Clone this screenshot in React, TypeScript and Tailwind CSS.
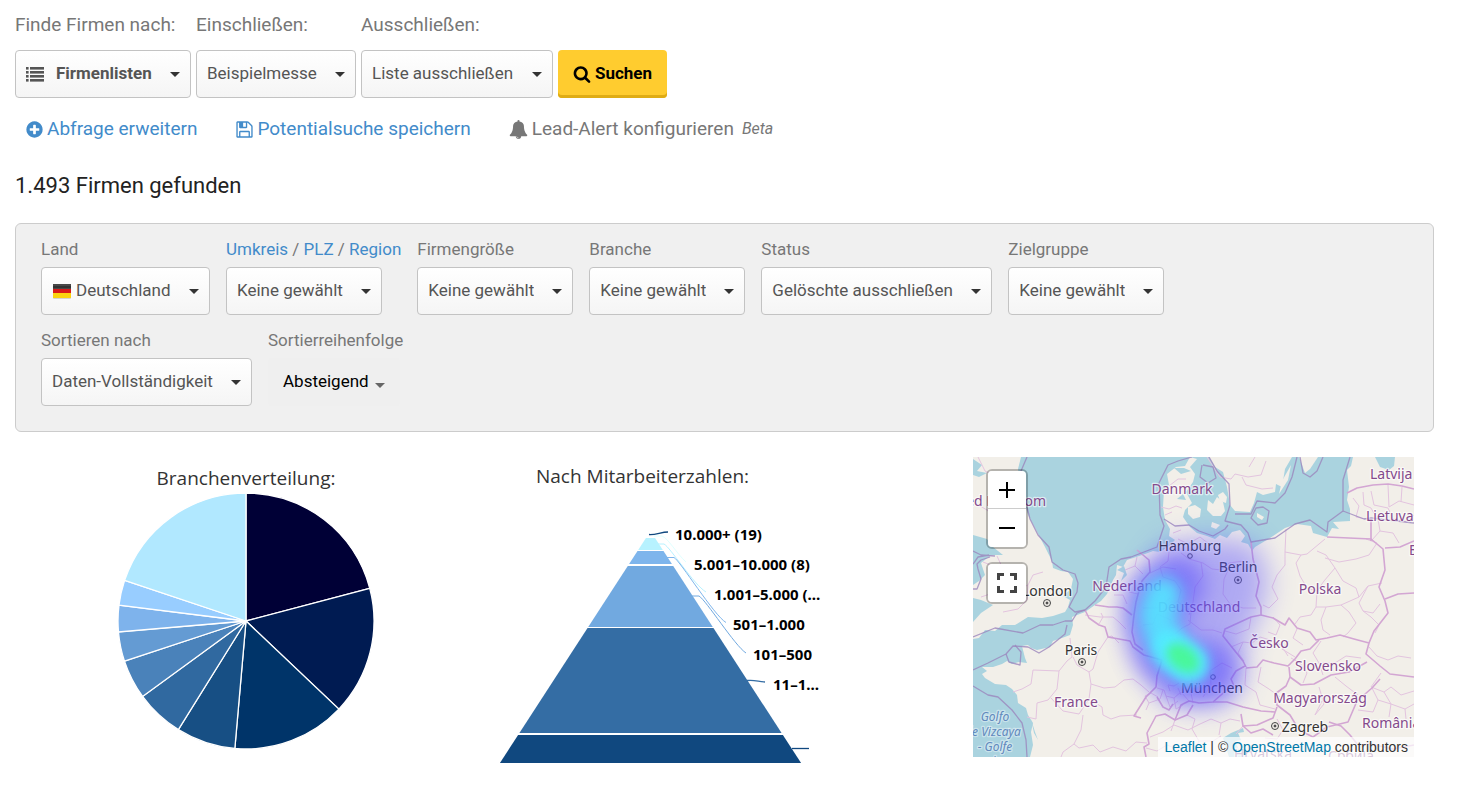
import React from 'react';
import clsx from 'clsx';

interface DropdownProps {
    id: string;
    label: React.ReactNode;
    name: string;
    value: string;
    icon?: React.ReactNode;
    bold?: boolean;
    size?: 'lg' | 'md';
}

const Caret = ({ className }: { className?: string }) => (
    <svg viewBox="0 0 10 5" className={clsx('w-[10px] h-[5px] pointer-events-none', className)}>
        <path d="M0 0h10L5 5z" fill="currentColor" />
    </svg>
);

// Font Awesome 4 glyphs, drawn on a 1792 grid
const Glyph = ({ d, className }: { d: string; className?: string }) => (
    <svg viewBox="0 0 1792 1792" className={clsx('shrink-0', className)} fill="currentColor">
        <path d={d} />
    </svg>
);

const PLUS = 'M1344 960v-128q0-26-19-45t-45-19h-256v-256q0-26-19-45t-45-19h-128q-26 0-45 19t-19 45v256h-256q-26 0-45 19t-19 45v128q0 26 19 45t45 19h256v256q0 26 19 45t45 19h128q26 0 45-19t19-45v-256h256q26 0 45-19t19-45zm320-64q0 209-103 385.5t-279.5 279.5-385.5 103-385.5-103-279.5-279.5-103-385.5 103-385.5 279.5-279.5 385.5-103 385.5 103 279.5 279.5 103 385.5z';
const SAVE = 'M512 1536h768v-384h-768v384zm896 0h128v-896q0-14-10-38.5t-20-34.5l-281-281q-10-10-34-20t-39-10v416q0 40-28 68t-68 28h-576q-40 0-68-28t-28-68v-416h-128v1280h128v-416q0-40 28-68t68-28h832q40 0 68 28t28 68v416zm-384-928v-320q0-13-9.5-22.5t-22.5-9.5h-192q-13 0-22.5 9.5t-9.5 22.5v320q0 13 9.5 22.5t22.5 9.5h192q13 0 22.5-9.5t9.5-22.5zm640 32v928q0 40-28 68t-68 28h-1344q-40 0-68-28t-28-68v-1344q0-40 28-68t68-28h928q40 0 88 20t76 48l280 280q28 28 48 76t20 88z';
const BELL = 'M912 1696q0-16-16-16-59 0-101.5-42.5t-42.5-101.5q0-16-16-16t-16 16q0 73 51.5 124.5t124.5 51.5q16 0 16-16zm816-288q0 52-38 90t-90 38h-448q0 106-75 181t-181 75-181-75-75-181h-448q-52 0-90-38t-38-90q50-42 91-88t85-119.5 74.5-158.5 50-206 19.5-260q0-152 117-282.5t307-158.5q-8-19-8-39 0-40 28-68t68-28 68 28 28 68q0 20-8 39 190 28 307 158.5t117 282.5q0 139 19.5 260t50 206 74.5 158.5 85 119.5 91 88z';
const SEARCH = 'M1216 832q0-185-131.5-316.5t-316.5-131.5-316.5 131.5-131.5 316.5 131.5 316.5 316.5 131.5 316.5-131.5 131.5-316.5zm512 832q0 52-38 90t-90 38q-54 0-90-38l-343-342q-179 124-399 124-143 0-273.5-55.5t-225-150-150-225-55.5-273.5 55.5-273.5 150-225 225-150 273.5-55.5 273.5 55.5 225 150 150 225 55.5 273.5q0 220-124 399l343 343q37 37 37 90z';

const ListIcon = () => (
    <svg viewBox="0 0 18 15" className="w-[18px] h-[15px] mr-3 shrink-0" fill="currentColor">
        {[0, 4, 8, 12].map((y) => (
            <g key={y}>
                <rect x="0" y={y} width="2.6" height="2.6" />
                <rect x="4" y={y} width="14" height="2.6" />
            </g>
        ))}
    </svg>
);

const GermanFlag = () => (
    <svg viewBox="0 0 20 18" className="w-5 h-[18px] mr-1 shrink-0">
        <rect x="1" y="3" width="18" height="14" rx="1" fill="#000" opacity="0.15" />
        <rect x="1" y="2" width="18" height="5" fill="#484848" />
        <rect x="1" y="4" width="18" height="2" fill="#333" />
        <rect x="1" y="7" width="18" height="4" fill="#d81818" />
        <rect x="1" y="11" width="18" height="5" fill="#fbd30f" />
    </svg>
);

const Dropdown: React.FC<DropdownProps> = ({ id, label, name, value, icon, bold, size = 'md' }) => (
    <div className={clsx('flex flex-col items-start', size === 'lg' ? 'gap-[13px]' : 'gap-[6px]')}>
        {typeof label === 'string' ? (
            <label htmlFor={id} className={clsx('leading-6', size === 'lg' ? 'text-[19px]' : 'text-[17px]')}>{label}</label>
        ) : (
            <div className="text-[17px] leading-6">{label}</div>
        )}
        <div className="relative flex items-center h-12 pl-[10px] rounded border border-[#c3c3c3] bg-linear-to-b from-white to-[#f5f5f5] text-[#555]">
            {icon}
            <select
                id={id}
                aria-label={name}
                defaultValue={value}
                className={clsx('appearance-none bg-transparent h-full pr-[38px] text-[17px] outline-none', bold && 'font-bold')}
            >
                <option>{value}</option>
            </select>
            <Caret className="absolute right-[10px] top-[21px] text-[#333]" />
        </div>
    </div>
);

const SLICES = [
    { to: 75.2, fill: '#000036' },
    { to: 133.5, fill: '#001b52' },
    { to: 185, fill: '#003469' },
    { to: 211.9, fill: '#174f84' },
    { to: 233.9, fill: '#3069a0' },
    { to: 251.7, fill: '#4a82ba' },
    { to: 265.1, fill: '#649bd3' },
    { to: 277.1, fill: '#7eb3ec' },
    { to: 288.5, fill: '#98cdff' },
    { to: 360, fill: '#b1e8ff' },
];

const slicePath = (from: number, to: number) => {
    const at = (deg: number) => {
        const rad = (deg * Math.PI) / 180;
        return `${128 + 128 * Math.sin(rad)} ${128 - 128 * Math.cos(rad)}`;
    };
    return `M128 128L${at(from)}A128 128 0 0 1 ${at(to)}Z`;
};

const PieChart = () => (
    <svg viewBox="0 0 256 256" className="w-64 h-64" role="img" aria-label="Branchenverteilung">
        {SLICES.map((slice, i) => (
            <path
                key={slice.fill}
                d={slicePath(i === 0 ? 0 : SLICES[i - 1].to, slice.to)}
                fill={slice.fill}
                stroke="#fff"
                strokeWidth="1.3"
            />
        ))}
    </svg>
);

const LEVELS = [
    { top: 11, bottom: 23, fill: '#b7f2ff' },
    { top: 24, bottom: 37, fill: '#7eb5ec' },
    { top: 39, bottom: 100, fill: '#71a9e0' },
    { top: 101, bottom: 206, fill: '#346da4' },
    { top: 208, bottom: 236, fill: '#10487f' },
];

const LEVEL_LABELS = [
    { x: 175, y: 13, text: '10.000+ (19)' },
    { x: 194, y: 43, text: '5.001–10.000 (8)' },
    { x: 214, y: 73, text: '1.001–5.000 (…' },
    { x: 233, y: 103, text: '501–1.000' },
    { x: 253, y: 133, text: '101–500' },
    { x: 273, y: 163, text: '11–1…' },
];

const half = (y: number) => (y - 4) * 0.649;

const PyramidChart = () => (
    <svg viewBox="0 0 330 240" className="w-[330px] h-60 overflow-visible" role="img" aria-label="Nach Mitarbeiterzahlen">
        {LEVELS.map(({ top, bottom, fill }) => (
            <path
                key={fill}
                d={`M${150.5 - half(top)} ${top}H${150.5 + half(top)}L${150.5 + half(bottom)} ${bottom}H${150.5 - half(bottom)}Z`}
                fill={fill}
            />
        ))}
        <g fill="none">
            <path d="M149 7.5C156 8 161 5 168 5" stroke="#10487f" strokeWidth="1.3" />
            <path d="M154 9h8c6 2 15 18 24 26" stroke="#e0ffff" />
            <path d="M158 17h6c6 3 30 41 42 48" stroke="#b7f2ff" />
            <path d="M166 30.500h8c6 3 40 58 52 65" stroke="#7eb5ec" />
            <path d="M192 69h7c7 4 36 50 47 57" stroke="#71a9e0" />
            <path d="M247 153.500c7-1 11 1 18 1.500" stroke="#346da4" strokeWidth="1.3" />
            <path d="M292 221.500h17" stroke="#10487f" strokeWidth="1.3" />
        </g>
        <g className="font-['Noto_Sans','Open_Sans',sans-serif] text-[15px] font-bold" fill="#000">
            {LEVEL_LABELS.map((l) => (
                <text key={l.text} x={l.x} y={l.y}>{l.text}</text>
            ))}
        </g>
    </svg>
);

const COUNTRIES = [
    { x: 73, y: 49, text: 'United Kingdom', anchor: 'end' },
    { x: 209, y: 37, text: 'Danmark' },
    { x: 154, y: 134, text: 'Nederland' },
    { x: 226, y: 155, text: 'Deutschland' },
    { x: 347, y: 137, text: 'Polska' },
    { x: 296, y: 191, text: 'Česko' },
    { x: 355, y: 214, text: 'Slovensko' },
    { x: 347, y: 246, text: 'Magyarország' },
    { x: 103, y: 250, text: 'France' },
    { x: 389, y: 271, text: 'România', anchor: 'start' },
    { x: 397, y: 22, text: 'Latvija', anchor: 'start' },
    { x: 393, y: 64, text: 'Lietuva', anchor: 'start' },
    { x: 436, y: 98, text: 'Беларусь', anchor: 'start' },
    { x: 290, y: 302, text: 'Hrvatska' },
    { x: 378, y: 304, text: 'Србија' },
] as const;

const CITIES = [
    { x: 217, y: 94, text: 'Hamburg', dot: [217, 99] },
    { x: 265, y: 115, text: 'Berlin', dot: [265, 123], capital: true },
    { x: 74, y: 139, text: 'London', dot: [74, 146], capital: true },
    { x: 108, y: 198, text: 'Paris', dot: [109, 205], capital: true },
    { x: 239, y: 236, text: 'München', dot: [240, 220] },
    { x: 332, y: 275, text: 'Zagreb', dot: [302, 269], capital: true },
];

const LAND = [
    // Great Britain
    'M0 0H48L45 12L50 40L55 58L62 71L72 90L79 104L80 111L88 114L95 115L100 122L98 132L90 139L97 143L95 150L92 155L80 159L69 161L55 160L42 168L29 168L22 174L12 173L6 181L0 182V165L8 156L20 148L8 143L0 141V128L6 124L12 118L8 106L18 98L30 98L20 90L14 82L0 78Z',
    // Continent
    'M217 0L212 9L203 10L194 17L196 28L191 33L190 50L192 63L197 72L196 79L202 83L196 89L187 95L180 94L172 97L163 100L154 103L150 110L144 108L143 118L140 123L134 137L128 144L122 148L112 155L99 160L100 168L97 178L89 181L80 184L77 190L64 193L58 191L55 188L49 189L52 201L54 206L46 205L39 207L34 204L29 207L20 210L9 210L14 214L9 217L12 221L22 227L33 228L39 232L44 238L45 246L53 251L55 258L60 266L58 275L60 288L57 300H441V0H380L378 9L374 13L376 30L374 43L377 52L377 64L360 65L366 72L359 71L354 80L340 76L338 69L324 67L312 71L297 81L282 90L279 94L275 87L268 85L272 79L267 73L259 75L254 81L247 78L242 82L234 79L224 76L217 70L210 60L212 53L219 46L213 35L220 25L222 17L217 10L224 2Z',
    // Sweden
    'M236 0L242 10L250 15L254 30L257 48L262 54L277 55L281 46L284 35L290 38L302 35L303 27L309 30L312 12L319 0Z',
    'M326 0L332 16L337 12L345 0Z',
    'M306 37L309 24L318 8L315 23Z',
    'M235 43L240 47L244 40L250 45L252 54L248 59L240 59L234 53Z',
    'M215 50L222 48L228 52L227 60L220 62L215 57Z',
    'M245 38L250 35L254 40L253 46L247 44Z',
    'M284 56L291 60L289 63L284 60Z',
    'M239 65L247 68L243 72L238 70Z',
];

const WATER = [
    'M402 0L407 10L416 13L421 9L422 0Z',
    'M250 281L258 276L270 271L271 275L265 276L268 283L262 284L266 293L276 300H256Z',
    'M144 113L151 116L148 124L154 118L151 109Z',
    'M201 11L208 17L218 14L211 11Z',
    'M210 37L204 42L213 43Z',
    'M0 2L9 8L4 14L14 16L6 20L0 18Z',
    'M58 262L62 275L65 283L61 276Z',
];

// International and maritime boundaries
const BORDERS = [
    'M54 0L48 14L51 38L57 62L65 78L76 90L79 105L90 113L102 117L105 126L104 135L99 144L96 150L102 155L112 153',
    'M219 0L205 4L195 8L186 26L187 58L191 69L184 90L158 100L148 102L136 110L133 130L122 144L112 153L104 156L99 164L92 164L80 168L67 168L50 176L22 171L0 180',
    'M0 213L15 206L33 197L40 189L55 190L66 196L76 190L92 177L94 168',
    'M33 197L36 205L47 208L48 195L42 188',
    'M0 229L15 238L25 240L39 253L49 266L53 283L54 300',
    'M236 0L244 14L256 27L257 48L252 64L268 68L275 76L278 85L302 81L322 67L337 63L354 75L355 65L370 54L370 23L377 0',
    'M230 8L240 10L243 21L235 26L227 20L229 8',
    'M324 0L319 20L312 36L302 46L284 44L278 57L262 57',
    'M290 50L296 54L294 66L285 68L278 61L283 51Z',
    'M327 0L330 16L337 20L344 14L350 0',
    'M370 54L391 62L398 61L441 66',
    'M191 62L202 69L216 68L226 74L240 79L252 72L255 68',
    'M0 94L8 98L22 99M0 107L5 100L16 98M17 100L8 103L4 107L5 112L8 122L4 132L0 132',
];

const COUNTRY_BORDERS = [
    'M278 85L280 102L286 125L283 139L288 150L288 158L278 160L252 172L250 179L258 189L270 204L273 210',
    'M272 209L263 214L258 222L261 229L256 231L240 245L226 246L216 244L208 248L202 263L192 257L183 259L174 276L176 287L171 290L173 300',
    'M112 153L116 161L126 168L132 170L135 180L146 182L157 184L160 190L171 198L189 203L184 219L183 230L173 240L161 259L168 261',
    'M164 93L176 103L177 115L169 124L166 134L163 145L161 158L159 175L162 187L170 193',
    'M122 148L136 150L144 150L150 151L159 158',
    'M288 158L300 161L312 168L316 161L324 171L337 175L343 183L354 181L367 178L381 182L396 186L393 197L407 209L417 217L441 220',
    'M273 211L284 210L290 203L301 206L315 209L322 202L328 194L337 192L346 183',
    'M316 210L317 220L328 228L341 227L358 218L376 215L394 205',
    'M317 220L313 229L302 237L304 248L317 258L326 273L340 280L354 270L375 265L384 244L399 231L407 222',
    'M240 245L254 245L270 250L288 254L302 255M268 257L270 269L284 268L300 261L304 250M270 269L278 276L290 272L300 278',
    'M354 80L398 82L410 92L412 113L406 130L412 144L415 156L401 174L396 186',
    'M374 36L384 31L400 28L415 27L429 29L441 32M398 62L398 84M412 91L427 90L441 84M412 142L425 137L441 136',
    'M356 265L368 269L377 278L385 288L398 287L420 292L441 288',
    'M184 240L190 250L196 253L200 247M202 263L214 258L220 248',
];

// Inner administrative lines
const REGIONS = [
    'M60 213L58 227L49 232L40 235M60 213L86 214L94 204L99 200L97 181M86 214L84 232L75 243L64 246L63 262L54 260M100 200L104 208L116 215L120 212L125 195L135 180',
    'M116 215L118 227L116 242L106 257L90 254L78 241M118 227L131 231L142 230L151 223L160 222L168 228L176 235M116 242L129 250L130 258L138 262L147 259L164 258',
    'M110 258L108 273L101 287L106 291L120 288L127 295L140 290L153 294L163 285L174 286M101 287L90 295L88 300',
    'M112 158L127 160L140 160L146 165L153 172M126 167L130 160L128 156M135 180L139 179L146 186',
    'M164 100L162 109L152 113M162 109L170 117M156 135L165 137M154 147L150 138L141 138',
    'M196 95L195 104L187 110L190 120L202 124L208 133L205 145L218 154L217 167L209 171L201 178L192 179L186 192M177 116L190 110L203 112M228 105L230 119L222 130L220 145L216 158M208 96L216 102L230 106L239 112L248 113L256 106L270 104M258 107L251 122L250 137L257 147L270 151L283 151M215 163L228 173L240 173L249 176M170 151L185 151L197 141M170 168L180 167L184 157L198 163',
    'M205 82L215 87L227 80L236 87M200 76L208 73M195 210L204 207L214 214L219 220L218 236L220 246M201 182L208 193L219 202L222 210M230 240L238 228L237 214L249 206L259 211',
    'M184 231L191 233L193 239L201 241L208 235L216 244M190 233L187 242L176 246L173 253M193 239L197 250L205 244M201 241L203 252L210 248M205 231L208 238M176 246L172 239L178 236L185 240M197 234L195 228L201 229L206 226',
    'M313 72L312 95L328 98L334 97L346 87L352 82M328 98L323 106L327 119L334 131L344 134L351 124L362 111L353 98L344 94M352 101L366 105L383 102L396 98L404 86L393 82M362 111L370 124L383 131L386 140L395 129L409 126M312 95L312 108L304 118L299 130L305 142L296 151L290 148',
    'M344 134L343 150L338 158L327 160L322 167M343 150L353 150L368 148L377 144L386 140M353 150L348 163L350 173L357 178M368 148L376 155L383 166L375 176L370 180M395 129L386 146L390 154L400 156L407 147M390 154L398 160L406 168L402 176',
    'M234 0L247 20L258 22L262 17L275 20L288 18L293 4M282 0L276 10M269 20L273 28L289 32L300 31M188 50L196 52L203 49L209 51M196 29L205 22L213 22M199 55L192 58',
    'M380 41L386 49L383 60L398 63M390 35L391 48L398 51L404 62M398 34L401 48L415 51L420 62M415 28L416 50L426 44L441 48M405 62L407 74L399 83M407 74L420 76L426 86M420 62L434 65L441 58M429 30L428 45',
    'M300 160L307 168L303 178L295 175M258 190L270 185L279 186L287 180L297 183L308 188L315 199M278 160L276 172L263 177L252 174M270 185L265 196L271 204M316 184L309 192L322 200M324 172L320 181L330 188',
    'M288 210L285 225L296 232L307 240M273 211L272 228L283 235L287 248L302 252M318 201L327 206L334 216L330 226M348 184L340 196L346 206L362 206L373 199L388 201M346 206L350 218',
    'M346 230L351 247L342 258M362 220L373 229L385 238M304 262L310 273L304 282L292 281M349 244L342 258M396 190L404 199L415 203L425 199L438 201M408 216L398 230L411 235L418 230L428 238L441 234M399 231L405 243L400 255L385 253M411 235L418 247L432 252L441 247M405 243L418 247M418 247L416 260M432 252L433 262',
    'M177 280L190 275L201 268L215 273L227 267L238 262L248 266L257 262L267 264M202 263L198 274M214 258L222 262L219 272L226 284M248 266L246 278M270 269L263 277M226 284L240 284L248 279M173 291L184 294L194 288L204 292L214 290M226 284L221 296M10 105L23 110L28 120M24 99L30 112L44 116M8 140L20 136L28 126M30 130L44 133L55 128L60 118L70 115M55 128L54 143L45 152L30 155',
    'M0 45L14 53L23 63M5 0L12 14L24 20L40 16M14 53L30 52L45 45',
];

const BLURS = [
    { id: 'soft', deviation: 14 },
    { id: 'mid', deviation: 11 },
    { id: 'hot', deviation: 8 },
    { id: 'core', deviation: 5 },
];

const MapView = () => (
    <svg viewBox="0 0 441 300" preserveAspectRatio="xMidYMid slice" className="block w-full h-[300px]" role="img" aria-label="Karte">
        <defs>
            {BLURS.map((b) => (
                <filter key={b.id} id={b.id} filterUnits="userSpaceOnUse" x="0" y="0" width="441" height="300" colorInterpolationFilters="sRGB">
                    <feGaussianBlur stdDeviation={b.deviation} />
                </filter>
            ))}
        </defs>
        <rect width="441" height="300" fill="#aad3df" />
        {LAND.map((d) => <path key={d} d={d} fill="#f2efe9" />)}
        {WATER.map((d) => <path key={d} d={d} fill="#aad3df" />)}
        <g fill="none" strokeLinejoin="round">
            {REGIONS.map((d) => <path key={d} d={d} stroke="#e3c4df" strokeWidth="1" />)}
            {COUNTRY_BORDERS.map((d) => <path key={d} d={d} stroke="#d3a6d3" strokeWidth="1.6" />)}
            {BORDERS.map((d) => <path key={d} d={d} stroke="#9b86bd" strokeWidth="1.3" opacity="0.8" />)}
        </g>
        <g className="font-['Noto_Sans',sans-serif]" textAnchor="middle" stroke="#fff" strokeOpacity="0.6" strokeWidth="2.5" paintOrder="stroke" strokeLinejoin="round">
            <g className="text-[14px]" fill="#844a8c">
                {COUNTRIES.map((c) => (
                    <text key={c.text} x={c.x} y={c.y} textAnchor={'anchor' in c ? c.anchor : 'middle'}>{c.text}</text>
                ))}
            </g>
            <g className="text-[14px]" fill="#333">
                {CITIES.map((c) => <text key={c.text} x={c.x} y={c.y}>{c.text}</text>)}
            </g>
            <g className="text-[12px] italic" fill="#6189bd" strokeOpacity="0.4">
                <text x="22" y="264">Golfo</text>
                <text x="20" y="279">de Vizcaya</text>
                <text x="22" y="294">- Golfe</text>
                <text x="22" y="309">de</text>
            </g>
        </g>
        {CITIES.map((c) => (
            <g key={c.text} stroke="#444" fill="none">
                <circle cx={c.dot[0]} cy={c.dot[1]} r={c.capital ? 3.5 : 2.3} />
                {c.capital && <circle cx={c.dot[0]} cy={c.dot[1]} r="1" fill="#444" />}
            </g>
        ))}
        {/* Heat layer */}
        <path d="M190 88L235 80L282 86L296 120L290 150L270 190L268 230L242 252L195 244L164 198L152 145Z" fill="#5a50ff" opacity="0.44" filter="url(#soft)" />
        <path d="M202 128L184 140L180 164L190 196L212 216L236 214" fill="none" stroke="#4a3cff" strokeWidth="60" strokeLinecap="round" strokeLinejoin="round" opacity="0.45" filter="url(#mid)" />
        <path d="M190 138L184 158L190 180L204 200L216 205" fill="none" stroke="#4ff4ff" strokeWidth="37" strokeLinecap="round" strokeLinejoin="round" opacity="0.8" filter="url(#hot)" />
        <path d="M198 192L216 208" fill="none" stroke="#4ff4ff" strokeWidth="38" strokeLinecap="round" opacity="0.6" filter="url(#core)" />
        <ellipse cx="210" cy="201" rx="18" ry="12" transform="rotate(38 210 201)" fill="#49f79c" filter="url(#core)" />
    </svg>
);

const MAP_BUTTON = 'flex items-center justify-center w-[38px] h-[38px] bg-white text-black';

export default function App() {
    return (
        <main className="pl-[15px] pr-9 pt-[13px] pb-9 font-[Roboto,sans-serif] text-[#777] bg-white">
            {/* Search bar */}
            <form className="flex flex-wrap items-end gap-[5px]" onSubmit={(e) => e.preventDefault()}>
                <Dropdown id="by" size="lg" label="Finde Firmen nach:" name="Finde Firmen nach" value="Firmenlisten" icon={<ListIcon />} bold />
                <Dropdown id="include" size="lg" label="Einschließen:" name="Einschließen" value="Beispielmesse" />
                <Dropdown id="exclude" size="lg" label="Ausschließen:" name="Ausschließen" value="Liste ausschließen" />
                <button className="flex items-center h-12 px-[15px] gap-1 rounded bg-[#ffcc2f] shadow-[inset_0_-3px_0_#dfac14] text-black text-[17px] font-bold">
                    <Glyph d={SEARCH} className="w-[18px] h-[18px]" />
                    Suchen
                </button>
            </form>

            <nav className="flex flex-wrap items-center mt-[17px] px-[10px] gap-x-[38px] text-[19px] leading-7 text-[#428bca]">
                <a href="#erweitern" className="flex items-center gap-[3px]">
                    <Glyph d={PLUS} className="w-[19px] h-[19px]" />
                    Abfrage erweitern
                </a>
                <a href="#speichern" className="flex items-center gap-[3px]">
                    <Glyph d={SAVE} className="w-[19px] h-[19px]" />
                    Potentialsuche speichern
                </a>
                <a href="#alert" className="flex items-center gap-1 text-[#777]">
                    <Glyph d={BELL} className="w-[19px] h-[19px]" />
                    Lead-Alert konfigurieren
                    <em className="ml-1 text-[16px]">Beta</em>
                </a>
            </nav>

            <h1 className="mt-[27px] text-[22px] leading-8 text-[#222]">1.493 Firmen gefunden</h1>

            {/* Filters */}
            <section className="flex flex-col gap-[13px] mt-[21px] px-[25px] pt-[13px] pb-[25px] rounded-md border border-[#ccc] bg-[#f0f0f0]">
                <div className="flex flex-wrap gap-x-4 gap-y-[13px]">
                    <Dropdown id="land" label="Land" name="Land" value="Deutschland" icon={<GermanFlag />} />
                    <Dropdown
                        id="region"
                        name="Region"
                        value="Keine gewählt"
                        label={
                            <>
                                <a href="#umkreis" className="text-[#428bca]">Umkreis</a> / <a href="#plz" className="text-[#428bca]">PLZ</a> / <a href="#region" className="text-[#428bca]">Region</a>
                            </>
                        }
                    />
                    <Dropdown id="size" label="Firmengröße" name="Firmengröße" value="Keine gewählt" />
                    <Dropdown id="branche" label="Branche" name="Branche" value="Keine gewählt" />
                    <Dropdown id="status" label="Status" name="Status" value="Gelöschte ausschließen" />
                    <Dropdown id="target" label="Zielgruppe" name="Zielgruppe" value="Keine gewählt" />
                </div>
                <div className="flex flex-wrap gap-x-4 gap-y-[13px]">
                    <Dropdown id="sort" label="Sortieren nach" name="Sortieren nach" value="Daten-Vollständigkeit" />
                    <div className="flex flex-col items-start gap-[6px]">
                        <label htmlFor="order" className="text-[17px] leading-6">Sortierreihenfolge</label>
                        <button id="order" className="flex items-center h-12 px-[15px] gap-[6px] rounded bg-[#efefef] text-[17px] text-black">
                            Absteigend
                            <Caret className="mt-[6px] text-[#666]" />
                        </button>
                    </div>
                </div>
            </section>

            {/* Charts */}
            <section className="grid grid-cols-3 mt-[25px]">
                <div className="flex flex-col items-center pr-[11px] pt-[7px]">
                    <h2 className="mb-px font-['Open_Sans','Noto_Sans',sans-serif] text-[19px] leading-7 text-[#333]">Branchenverteilung:</h2>
                    <PieChart />
                </div>
                <div className="pl-3 pt-[5px]">
                    <h2 className="pl-9 mb-[37px] font-['Open_Sans','Noto_Sans',sans-serif] text-[19px] leading-7 text-[#333]">Nach Mitarbeiterzahlen:</h2>
                    <PyramidChart />
                </div>
                <div className="pl-3 pr-5">
                    <div className="relative overflow-hidden">
                        <MapView />
                        <div className="absolute left-[13px] top-3 flex flex-col gap-[13px]">
                            <div className="rounded-md border-2 border-black/25 bg-clip-padding overflow-hidden">
                                <button aria-label="Zoom in" className={clsx(MAP_BUTTON, 'border-b border-[#ccc]')}>
                                    <svg viewBox="0 0 16 16" className="w-4 h-4"><path d="M8 0v16M0 8h16" stroke="currentColor" strokeWidth="2" /></svg>
                                </button>
                                <button aria-label="Zoom out" className={MAP_BUTTON}>
                                    <svg viewBox="0 0 16 16" className="w-4 h-4"><path d="M0 8h16" stroke="currentColor" strokeWidth="2" /></svg>
                                </button>
                            </div>
                            <div className="rounded-md border-2 border-black/25 bg-clip-padding overflow-hidden">
                                <button aria-label="Vollbild" className={MAP_BUTTON}>
                                    <svg viewBox="0 0 20 20" className="w-5 h-5" fill="none" stroke="#444" strokeWidth="3">
                                        <path d="M1.500 7V1.500H7M13 1.500h5.500V7M18.500 13v5.500H13M7 18.500H1.500V13" />
                                    </svg>
                                </button>
                            </div>
                        </div>
                        <div className="absolute right-0 bottom-0 px-[6px] bg-white/70 font-['Liberation_Sans',sans-serif] text-[14px] leading-5 text-[#333]">
                            <a href="#leaflet" className="text-[#0078a8]">Leaflet</a> | © <a href="#osm" className="text-[#0078a8]">OpenStreetMap</a> contributors
                        </div>
                    </div>
                </div>
            </section>
        </main>
    );
}
